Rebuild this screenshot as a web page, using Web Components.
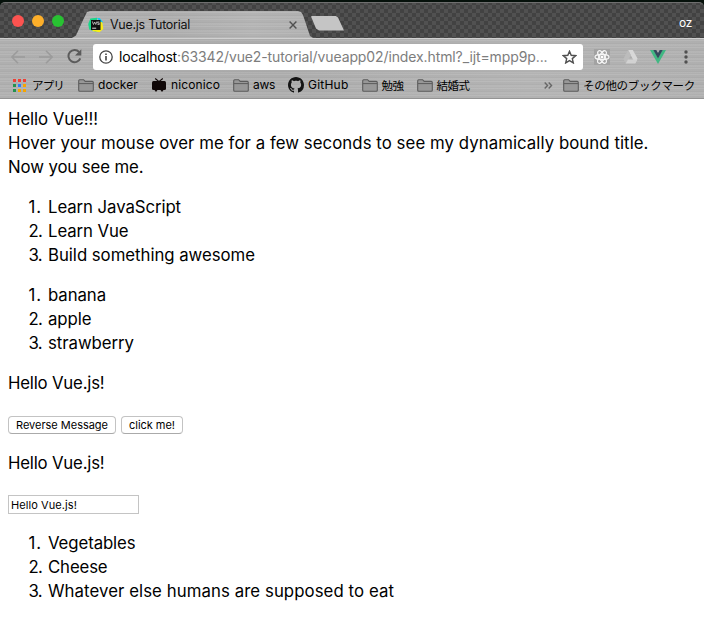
<!DOCTYPE html>
<html lang="ja"><head><meta charset="utf-8"><title>Vue.js Tutorial</title>
<style>
html,body{margin:0;padding:0;background:#fff}
body{width:704px;height:630px;overflow:hidden;font-family:Inter,"Noto Sans CJK JP",sans-serif;color:#000}
</style></head><body>
<browser-window>
<tab-strip slot="chrome"></tab-strip>
<tool-bar slot="chrome"></tool-bar>
<bookmark-bar slot="chrome"></bookmark-bar>
<vue-page></vue-page>
</browser-window>
<script>
const define=(name,html)=>{
  const t=document.createElement('template');t.innerHTML=html;
  customElements.define(name,class extends HTMLElement{
    constructor(){super();this.attachShadow({mode:'open'}).append(t.content.cloneNode(true));}
  });
};
/* A single line of text set to a given measure by tracking. */
customElements.define('fit-text',class extends HTMLElement{
  connectedCallback(){
    if(this.shadowRoot)return;
    this.attachShadow({mode:'open'}).innerHTML='<style>:host{display:block;flex:none;white-space:nowrap}span{display:inline-block}</style><span></span>';
    const s=this.shadowRoot.querySelector('span');s.textContent=this.textContent;
    const w=parseFloat(this.getAttribute('w'));
    if(w){const n=s.textContent.length;
      s.style.letterSpacing=((w-s.getBoundingClientRect().width)/n)+'px';this.style.width=w+'px';}
  }
});
customElements.define('app-icon',class extends HTMLElement{
  connectedCallback(){
    if(this.shadowRoot)return;
    const I={
folder:[16,13,'<path d="M.7 11.3V1.7Q.7.7 1.7.7H5.6L7.2 2.4H14.3Q15.3 2.4 15.3 3.4V11.3Q15.3 12.3 14.3 12.3H1.7Q.7 12.3 .7 11.3Z" fill="#989898" stroke="#5c5c5c" stroke-width="1.1"/><path d="M1 4.6H15" stroke="#5c5c5c"/>'],
apps:[13,13,'<path fill="#ee4035" d="M0 0h3v3H0zM5 0h3v3H5zM10 0h3v3h-3z"/><path fill="#23934f" d="M0 5h3v3H0zM0 10h3v3H0z"/><path fill="#2f7df6" d="M5 5h3v3H5z"/><path fill="#f6a500" d="M10 5h3v3h-3zM5 10h3v3H5zM10 10h3v3h-3z"/>'],
tv:[14,14,'<path d="M3.2.5 7 3.6 10.8.5" fill="none" stroke="#100808" stroke-width="1.2"/><rect y="3" width="14" height="9" rx="1.5" fill="#100808"/><path d="M2.5 12h3l-1.5 2zM8.5 12h3L10 14z" fill="#100808"/>'],
github:[16,16,'<path fill="#151515" d="M8 0C3.58 0 0 3.58 0 8c0 3.54 2.29 6.53 5.47 7.59.4.07.55-.17.55-.38 0-.19-.01-.82-.01-1.49-2.01.37-2.53-.49-2.69-.94-.09-.23-.48-.94-.82-1.13-.28-.15-.68-.52-.01-.53.63-.01 1.08.58 1.23.82.72 1.21 1.87.87 2.33.66.07-.52.28-.87.51-1.07-1.78-.2-3.64-.89-3.64-3.95 0-.87.31-1.59.82-2.15-.08-.2-.36-1.02.08-2.12 0 0 .67-.21 2.2.82.64-.18 1.32-.27 2-.27s1.36.09 2 .27c1.53-1.04 2.2-.82 2.2-.82.44 1.1.16 1.92.08 2.12.51.56.82 1.27.82 2.15 0 3.07-1.87 3.75-3.65 3.95.29.25.54.73.54 1.48 0 1.07-.01 1.93-.01 2.2 0 .21.15.46.55.38A8.01 8.01 0 0 0 16 8c0-4.42-3.58-8-8-8z"/>'],
back:[14,14,'<path d="M14 7H1.5M7 .8.9 7 7 13.2" fill="none" stroke="#9b9b9b" stroke-width="1.6"/>'],
fwd:[14,14,'<path d="M0 7H12.5M7 .8 13.1 7 7 13.2" fill="none" stroke="#9b9b9b" stroke-width="1.6"/>'],
reload:[15,15,'<path d="M12.2 3.1A6.1 6.1 0 1 0 13.3 9.3" fill="none" stroke="#5b5b5b" stroke-width="2"/><path d="M14.3.3V6.6H8z" fill="#5b5b5b"/>'],
info:[14,14,'<circle cx="7" cy="7" r="6.2" fill="none" stroke="#444" stroke-width="1.3"/><path d="M7 6v4.5M7 3.4v1.5" stroke="#444" stroke-width="1.6"/>'],
star:[15,14,'<path d="M7.5 1.3 9.2 5.3 13.6 5.7 10.3 8.6 11.3 12.9 7.5 10.6 3.7 12.9 4.7 8.6 1.4 5.7 5.8 5.3Z" fill="none" stroke="#505050" stroke-width="1.4"/>'],
react:[16,16,'<rect width="16" height="16" fill="#a2a2a2"/><g fill="none" stroke="#f6f6f6" stroke-width="1.2"><ellipse cx="8" cy="8" rx="7" ry="2.7"/><ellipse cx="8" cy="8" rx="7" ry="2.7" transform="rotate(60 8 8)"/><ellipse cx="8" cy="8" rx="7" ry="2.7" transform="rotate(120 8 8)"/></g><circle cx="8" cy="8" r="1.5" fill="#fff"/>'],
drive:[15,14,'<path d="M5.1 0h4.7l4.7 8.6-2.4 5L5.1 0z" fill="#d8d8d8"/><path d="M5.1 0 8 5.2 3 13.6.3 9z" fill="#bcbcbc"/><path d="M5 9.5h9.5L12.2 13.6H2.7z" fill="#d2d2d2"/>'],
vue:[16,14,'<path d="M0 0h3.5L8 8l4.5-8H16L8 14z" fill="#41b883"/><path d="M3.3 0h3L8 3.1 9.7 0h3L8 8.4z" fill="#35495e"/>'],
dots:[4,14,'<g fill="#505050"><circle cx="2" cy="2" r="1.7"/><circle cx="2" cy="7" r="1.7"/><circle cx="2" cy="12" r="1.7"/></g>'],
more:[9,7,'<path d="M.7.6 3.5 3.5.7 6.4M4.7.6l2.8 2.9-2.8 2.9" fill="none" stroke="#666" stroke-width="1.4"/>'],
close:[8,8,'<path d="M.6.6l6.8 6.8M7.4.6.6 7.4" stroke="#505050" stroke-width="1.4"/>'],
storm:[16,16,'<path d="M2.4 1.5 9 .8 8.5 15 1.2 12.6.2 7z" fill="#19d788"/><path d="M9 1h2.7L15 5l-1.5 2z" fill="#16c9ed"/><path d="M10 4.2l4.3 1L15.3 12l-3.8 3.3L4.2 14z" fill="#f9ed18"/><rect x="3" y="3" width="9.5" height="10" fill="#101010"/><path d="M4.3 4.4 5.5 7.5 6.7 5l1.1 2.5L9 4.4M11.4 5H9.7v1.2h1.6v1.3H9.5" fill="none" stroke="#ccc" stroke-width=".8"/><path d="M4.2 11.2h4" stroke="#ddd"/>']
    }[this.getAttribute('name')];
    this.attachShadow({mode:'open'}).innerHTML=`<style>:host{display:block;flex:none;width:${I[0]}px;height:${I[1]}px}svg{display:block}</style><svg width="${I[0]}" height="${I[1]}" viewBox="0 0 ${I[0]} ${I[1]}">${I[2]}</svg>`;
  }
});
define('browser-window',`<style>
:host{display:flex;flex-direction:column;width:704px;height:630px;background:#fff;
--metal:repeating-linear-gradient(180deg,transparent 0 1px,rgba(255,255,255,.10) 1px 2px,transparent 2px 4px,rgba(0,0,0,.025) 4px 5px,rgba(255,255,255,.07) 5px 7px),linear-gradient(90deg,#afafaf,#acacac 40%,#b3b3b3 75%,#afafaf)}
</style><slot name="chrome"></slot><slot></slot>`);
define('tab-strip',`<style>
:host{display:flex;box-sizing:border-box;height:38px;padding-top:2px;background:#06110b}
.strip{flex:1;display:flex;align-items:center;box-sizing:border-box;border-top:1px solid #6f6f6f;border-radius:5px 5px 0 0;padding-right:12px;
background:repeating-conic-gradient(#424242 0 25%,#515151 0 50%) 0 2px/8px 8px;color:#fff;font-size:11px}
.lights{display:flex;gap:8px;padding-left:12px;margin-top:1px}
.lights i{width:12px;height:12px;border-radius:50%;align-self:center}
.tab{align-self:flex-end;display:flex;align-items:center;box-sizing:border-box;width:241px;height:27px;margin-left:8px;padding:0 0 0 16px;
background:var(--metal);clip-path:polygon(0 100%,4px 91%,12px 7px,15px 1px,18px 0,226px 0,229px 1px,231px 4px,238px 25px,241px 100%);font-size:12.5px;color:#111}
.tab fit-text{margin:0 99px 0 6px;line-height:26px}
.new{width:33px;height:15px;margin:5px 0 0 -2px;background:#c5c5c5;clip-path:polygon(2px 0,24px 0,27px 2px,33px 15px,8px 15px,5px 13px,0 1px)}
.who{margin:3px 0 0 auto;font-size:12px}
</style><div class="strip"><div class="lights"><i style="background:#fc5350"></i><i style="background:#fdaf2a"></i><i style="background:#28c132"></i></div>
<div class="tab"><app-icon name="storm"></app-icon><fit-text w="80">Vue.js Tutorial</fit-text><app-icon name="close"></app-icon></div><div class="new"></div><fit-text class="who" w="13">oz</fit-text></div>`);
define('tool-bar',`<style>
:host{display:flex;align-items:center;box-sizing:border-box;height:35px;padding:4px 0 3px 11px;background:var(--metal);border-top:1px solid #d0d0d0}
.url{display:flex;align-items:center;box-sizing:border-box;width:490px;height:26px;margin:1px 11px 0 11px;padding:0 6px 0 6px;background:#fff;border-radius:3px;font-size:14px;color:#7d7d7d;line-height:26px}
.host{color:#000;margin-left:6px}.url app-icon[name=star]{margin-left:auto}
</style><app-icon name="back"></app-icon><app-icon name="fwd" style="margin-left:14px"></app-icon><app-icon name="reload" style="margin-left:14px"></app-icon>
<div class="url"><app-icon name="info"></app-icon><fit-text class="host" w="58">localhost</fit-text><fit-text w="370.5">:63342/vue2-tutorial/vueapp02/index.html?_ijt=mpp9p...</fit-text><app-icon name="star"></app-icon></div>
<app-icon name="react"></app-icon><app-icon name="drive" style="margin-left:13px"></app-icon><app-icon name="vue" style="margin-left:12px"></app-icon><app-icon name="dots" style="margin-left:18px"></app-icon>`);
define('book-mark',`<style>:host{display:flex;align-items:center;flex:none;gap:4px}</style><slot></slot>`);
define('bookmark-bar',`<style>
:host{display:flex;align-items:center;box-sizing:border-box;height:26px;padding:0 9px 1px 13px;background:var(--metal);border-bottom:1px solid #949494;font-size:12px;gap:13px;line-height:20px}
.jp{padding-top:1px;font-size:11.5px}
</style><book-mark style="gap:6px;margin-right:1px"><app-icon name="apps"></app-icon><fit-text class="jp" w="32">アプリ</fit-text></book-mark>
<book-mark><app-icon name="folder"></app-icon><fit-text w="40">docker</fit-text></book-mark>
<book-mark style="gap:5px;margin-left:1px"><app-icon name="tv"></app-icon><fit-text w="49">niconico</fit-text></book-mark>
<book-mark><app-icon name="folder"></app-icon><fit-text w="22">aws</fit-text></book-mark>
<book-mark><app-icon name="github"></app-icon><fit-text w="40.5">GitHub</fit-text></book-mark>
<book-mark><app-icon name="folder"></app-icon><fit-text class="jp" w="22">勉強</fit-text></book-mark>
<book-mark><app-icon name="folder"></app-icon><fit-text class="jp" w="33">結婚式</fit-text></book-mark>
<app-icon name="more" style="margin-left:auto;margin-right:-3px"></app-icon>
<book-mark><app-icon name="folder"></app-icon><fit-text class="jp" w="112">その他のブックマーク</fit-text></book-mark>`);
define('list-row',`<style>:host{display:flex}.n{width:34px;margin-right:6px;display:flex;justify-content:flex-end}</style><div class="n"><slot name="n"></slot></div><slot></slot>`);
const row=(n,t,w)=>`<list-row><fit-text slot="n" w="13.5">${n}.</fit-text><fit-text w="${w}">${t}</fit-text></list-row>`;
define('vue-page',`<style>
:host{display:block;padding:8px 8px 0;font-size:16.8px;line-height:24px;font-weight:370}
.list{margin:16px 0}.p{margin:16px 0}
.buttons{display:flex;gap:5px;margin:21px 0 17px}
.btn{box-sizing:border-box;height:18px;padding:0 7px;border:1px solid #c3c3c3;border-bottom-color:#aaa;border-radius:4px;background:#fff;font-size:11px;line-height:16px;font-weight:400}
.input{box-sizing:border-box;width:131px;height:19px;margin:20px 0 17px;border:1px solid #c4c4c4;padding:1px 2px 0;font-size:11px;line-height:17px;font-weight:400}
</style><fit-text w="90">Hello Vue!!!</fit-text><fit-text w="640.5">Hover your mouse over me for a few seconds to see my dynamically bound title.</fit-text><fit-text w="135.5">Now you see me.</fit-text>
<div class="list">${row(1,'Learn JavaScript',133)}${row(2,'Learn Vue',80.5)}${row(3,'Build something awesome',207)}</div>
<div class="list">${row(1,'banana',58)}${row(2,'apple',43.5)}${row(3,'strawberry',86)}</div>
<fit-text class="p" w="96.5">Hello Vue.js!</fit-text>
<div class="buttons"><div class="btn"><fit-text w="92">Reverse Message</fit-text></div><div class="btn"><fit-text w="46">click me!</fit-text></div></div>
<fit-text class="p" w="96.5">Hello Vue.js!</fit-text>
<div class="input"><fit-text w="66">Hello Vue.js!</fit-text></div>
<div class="list">${row(1,'Vegetables',87.5)}${row(2,'Cheese',59.5)}${row(3,'Whatever else humans are supposed to eat',346)}</div>`);
</script></body></html>
